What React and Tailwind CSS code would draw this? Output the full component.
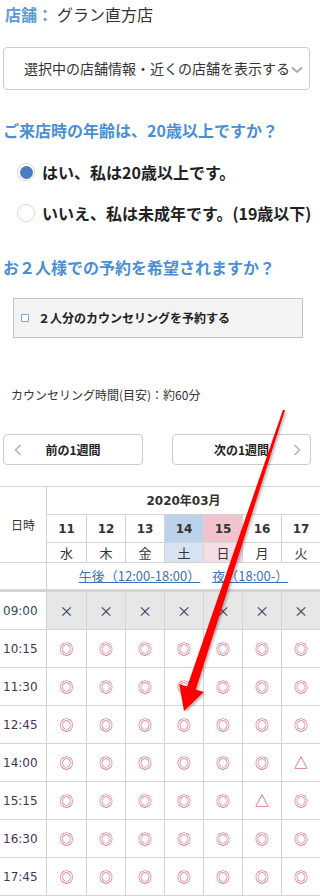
import React from 'react';

const jp = "font-['Noto_Sans_CJK_JP',sans-serif]";
const num = "font-['DejaVu_Sans','Noto_Sans_CJK_JP',sans-serif]";

const days = [
  { d: '11', w: '水' },
  { d: '12', w: '木' },
  { d: '13', w: '金' },
  { d: '14', w: '土', top: 'bg-[#bdd1ea]', bot: 'bg-[#d5e3f3]' },
  { d: '15', w: '日', top: 'bg-[#f1c4cd]', bot: 'bg-[#f7dde5]' },
  { d: '16', w: '月' },
  { d: '17', w: '火' },
];

const slots = [
  { t: '09:00', v: ['x', 'x', 'x', 'x', 'x', 'x', 'x'] },
  { t: '10:15', v: ['o', 'o', 'o', 'o', 'o', 'o', 'o'] },
  { t: '11:30', v: ['o', 'o', 'o', 'o', 'o', 'o', 'o'] },
  { t: '12:45', v: ['o', 'o', 'o', 'o', 'o', 'o', 'o'] },
  { t: '14:00', v: ['o', 'o', 'o', 'o', 'o', 'o', 't'] },
  { t: '15:15', v: ['o', 'o', 'o', 'o', 'o', 't', 'o'] },
  { t: '16:30', v: ['o', 'o', 'o', 'o', 'o', 'o', 'o'] },
  { t: '17:45', v: ['o', 'o', 'o', 'o', 'o', 'o', 'o'] },
];

const cols = 'grid grid-cols-[46px_40px_repeat(6,39px)]';

function Mark({ v }) {
  if (v === 'x') return <span className={`${jp} text-[14px] text-[#2f3f52]`}>×</span>;
  if (v === 't') return <span className={`${jp} text-[14px] text-[#d3356b]`}>△</span>;
  return <span className={`${jp} text-[14px] text-[#d3356b]`}>◎</span>;
}

function Radio({ checked, children }) {
  return (
    <div className="flex items-center h-[24px] pl-[17px]">
      <span className="w-[18px] h-[18px] rounded-full border border-[#d8d8d8] bg-white flex items-center justify-center">
        {checked && <span className="w-[13px] h-[13px] rounded-full bg-[#4a7ebf]" />}
      </span>
      <span className="ml-[7px] text-[16px] font-bold text-[#222] whitespace-nowrap">{children}</span>
    </div>
  );
}

function Chevron({ dir }) {
  return (
    <svg width="8" height="12" viewBox="0 0 8 12">
      <polyline
        points={dir === 'left' ? '6.5,1 1.5,6 6.5,11' : '1.5,1 6.5,6 1.5,11'}
        fill="none"
        stroke="#b5b5b5"
        strokeWidth="1.6"
      />
    </svg>
  );
}

export default function App() {
  return (
    <div className={`relative w-[320px] h-[896px] overflow-hidden bg-white text-[#333] ${jp}`}>
      <div className="pt-[5px] pl-[5px] text-[16px] leading-[18px] whitespace-nowrap">
        <span className="font-bold text-[#5b9ad6]">店舗：</span>
        <span className="ml-[4px] text-[#333]">グラン直方店</span>
      </div>

      <div className="mt-[24px] ml-[3px] w-[307px] h-[43px] border border-[#cccccc] rounded-[4px] flex items-center pl-[20px]">
        <span className="text-[14px] text-[#333] whitespace-nowrap">選択中の店舗情報・近くの店舗を表示する</span>
        <svg width="12" height="8" viewBox="0 0 12 8" className="ml-[1px] mt-[2px]">
          <polyline points="1,1.5 6,6 11,1.5" fill="none" stroke="#a8a8a8" strokeWidth="2" />
        </svg>
      </div>

      <div className="mt-[30px] pl-[3px] text-[16px] leading-[20px] font-bold text-[#4a8fd3] whitespace-nowrap">
        ご来店時の年齢は、20歳以上ですか？
      </div>

      <div className="mt-[20px]">
        <Radio checked>はい、私は20歳以上です。</Radio>
      </div>
      <div className="mt-[17px]">
        <Radio>いいえ、私は未成年です。(19歳以下)</Radio>
      </div>

      <div className="mt-[32px] pl-[3px] text-[16px] leading-[20px] font-bold text-[#4a8fd3] whitespace-nowrap">
        お２人様での予約を希望されますか？
      </div>

      <div className="mt-[21px] ml-[13px] w-[290px] h-[40px] border border-[#c4c4c4] bg-[#f3f3f3] flex items-center pl-[7px]">
        <span className="w-[8px] h-[8px] border border-[#86aad6] bg-white" />
        <span className="ml-[9px] text-[12px] font-bold text-[#222] whitespace-nowrap">
          ２人分のカウンセリングを予約する
        </span>
      </div>

      <div className="mt-[49px] pl-[11px] text-[12px] leading-[16px] text-[#333] whitespace-nowrap">
        カウンセリング時間(目安)：約60分
      </div>

      <div className="mt-[31px] flex">
        <button
          type="button"
          className="ml-[3px] w-[140px] h-[31px] border border-[#cccccc] rounded-[4px] bg-white relative flex items-center justify-center"
        >
          <span className="absolute left-[10px] top-[9px]">
            <Chevron dir="left" />
          </span>
          <span className="text-[12px] font-bold text-[#222]">前の1週間</span>
        </button>
        <button
          type="button"
          className="ml-[29px] w-[139px] h-[31px] border border-[#cccccc] rounded-[4px] bg-white relative flex items-center justify-center"
        >
          <span className="text-[12px] font-bold text-[#222]">次の1週間</span>
          <span className="absolute right-[9px] top-[9px]">
            <Chevron dir="right" />
          </span>
        </button>
      </div>

      <div className="mt-[21px] border-t border-[#d4d4d4]">
        <div className={`${cols} grid-rows-[28px_28px_20px]`}>
          <div className="row-span-3 border-b border-[#d4d4d4] flex items-center justify-center text-[12px] text-[#333]">
            日時
          </div>
          <div className={`col-span-7 border-l border-b border-[#d4d4d4] flex items-center justify-center text-[12px] font-bold text-[#333] ${num}`}>
            2020年03月
          </div>
          {days.map((d) => (
            <div
              key={d.d}
              className={`border-l border-b border-[#d4d4d4] flex items-center justify-center text-[12px] font-bold text-[#333] ${num} ${d.top || ''}`}
            >
              {d.d}
            </div>
          ))}
          {days.map((d) => (
            <div
              key={d.w}
              className={`border-l border-b border-[#d4d4d4] flex items-center justify-center text-[13px] text-[#333] ${d.bot || ''}`}
            >
              {d.w}
            </div>
          ))}
        </div>

        <div className="grid grid-cols-[46px_274px] h-[29px] border-b-[3px] border-[#d4d4d4]">
          <div />
          <div className="border-l border-[#d4d4d4] flex items-center justify-center gap-[12px] text-[13px] text-[#3b73b9] whitespace-nowrap">
            <span className="underline">午後（12:00-18:00）</span>
            <span className="underline">夜（18:00-）</span>
          </div>
        </div>

        {slots.map((s, i) => (
          <div key={s.t} className={`${cols} h-[38px] border-b border-[#d4d4d4]`}>
            <div className={`flex items-center pl-[3px] text-[12px] ${num} ${i === 0 ? 'text-[#34465a]' : 'text-[#4b2f5c]'}`}>
              {s.t}
            </div>
            {s.v.map((v, j) => (
              <div
                key={j}
                className={`border-l border-[#d4d4d4] flex items-center justify-center ${i === 0 ? 'bg-[#e7e7e7]' : ''}`}
              >
                <Mark v={v} />
              </div>
            ))}
          </div>
        ))}
      </div>

      {/* annotation arrow drawn over the page */}
      <svg
        className="absolute left-0 top-0 pointer-events-none"
        width="320"
        height="896"
        viewBox="0 0 320 896"
      >
        <defs>
          <filter id="sh" x="-20%" y="-20%" width="140%" height="140%">
            <feDropShadow dx="1.5" dy="1.5" stdDeviation="1.2" floodColor="#000" floodOpacity="0.3" />
          </filter>
        </defs>
        <polygon
          points="283,409.7 285,410.3 195.8,689.4 203.8,692.1 184,711 179.2,683.9 187.2,686.6"
          fill="#ff0000"
          filter="url(#sh)"
        />
      </svg>
    </div>
  );
}
